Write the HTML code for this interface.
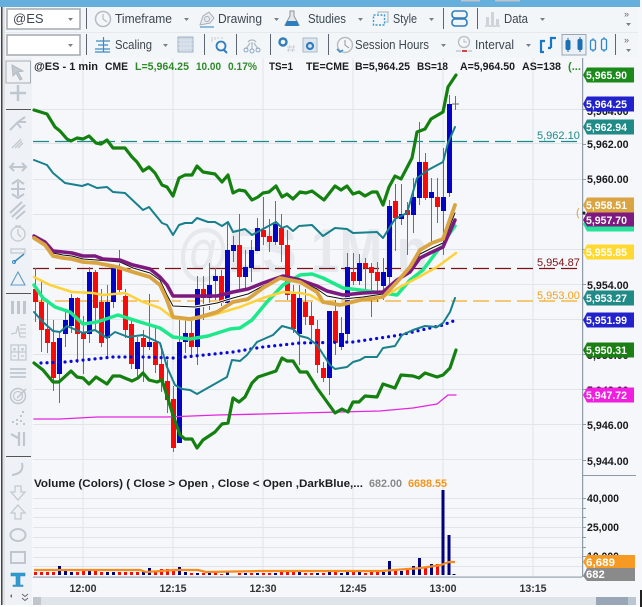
<!DOCTYPE html>
<html><head><meta charset="utf-8"><style>
html,body{margin:0;padding:0;background:#fff;width:642px;height:607px;overflow:hidden}
svg{display:block;font-family:"Liberation Sans",Arial,sans-serif}
.tb{font-size:13px;fill:#3c4650}
.lg{font-size:10.6px;font-weight:bold;fill:#1d1d1d}
.ax{font-size:10.7px;font-weight:bold;fill:#1a1a1a}
.tg{font-size:11.2px;font-weight:bold;fill:#fff}
.tm{font-size:10.6px;font-weight:bold;fill:#333;text-anchor:middle}
.car{fill:#77808a}
.i{fill:none;stroke:#c0c6ce;stroke-width:2}
.f{fill:#c0c6ce}
.b{fill:none;stroke:#3a8cc4;stroke-width:1.5}
.g{fill:none;stroke:#c3c9d0;stroke-width:1.3}
</style></head><body>
<svg width="642" height="607" viewBox="0 0 642 607" xmlns="http://www.w3.org/2000/svg">
<rect width="642" height="607" fill="#f5f7fa"/>
<!-- top -->
<rect x="0" y="0" width="640" height="7" fill="#66aedb"/>
<rect x="461" y="0" width="19" height="1.5" fill="#bcc4cc"/><rect x="495" y="0" width="25" height="1.5" fill="#bcc4cc"/>
<rect x="4" y="7" width="634" height="51" fill="#f3f6f9"/>
<rect x="4" y="32" width="634" height="1" fill="#e6eaef"/>
<rect x="1" y="7" width="1.5" height="600" fill="#444"/>
<rect x="2.5" y="7" width="2.5" height="600" fill="#dfe3e8"/>
<!-- row 1 -->
<rect x="7" y="9" width="73" height="20" fill="#fff" stroke="#a9adb2" stroke-width="1.6"/>
<text x="13" y="23" class="tb" fill="#333">@ES</text>
<path class="car" d="M68 18h5l-2.5 3z"/>
<rect x="86" y="8" width="1" height="21" fill="#5d6670"/>
<circle cx="103" cy="19" r="7.5" fill="#f4f6f8" stroke="#b5bcc4" stroke-width="1.5"/><path d="M103 14v5l4 3" fill="none" stroke="#b5bcc4" stroke-width="1.2"/>
<text x="115" y="23" class="tb" textLength="57" lengthAdjust="spacingAndGlyphs">Timeframe</text>
<path class="car" d="M184 18h5l-2.5 3z"/>
<path d="M200 25l3-9 6-4 5 6-4 5z" fill="#e8ecf0" stroke="#a9b0b9"/><circle cx="207" cy="19" r="2.5" fill="none" stroke="#a9b0b9"/><path d="M200 27h14" stroke="#6ea9d6" stroke-width="1.5"/>
<text x="218" y="23" class="tb" textLength="44" lengthAdjust="spacingAndGlyphs">Drawing</text>
<path class="car" d="M274 18h5l-2.5 3z"/>
<path d="M290 11h4v5l5 9h-14l5-9z" fill="#e4e8ec" stroke="#8d959e"/><path d="M287 21h10l2 5h-14z" fill="#2f7dbd"/>
<text x="308" y="23" class="tb" textLength="38" lengthAdjust="spacingAndGlyphs">Studies</text>
<path class="car" d="M358 18h5l-2.5 3z"/>
<rect x="373.500" y="15" width="11" height="10" fill="none" stroke="#3a9ad0" stroke-width="1.4" stroke-dasharray="2 1.5"/><path d="M378 15v-3h10v10h-3" fill="none" stroke="#b4bbc4" stroke-width="1.2"/>
<text x="393" y="23" class="tb" textLength="24" lengthAdjust="spacingAndGlyphs">Style</text>
<path class="car" d="M429 18h5l-2.500 3z"/>
<rect x="443" y="8" width="1" height="21" fill="#5d6670"/>
<rect x="452" y="11" width="15" height="7" rx="3" fill="none" stroke="#2f7dbd" stroke-width="1.6"/><rect x="452" y="19" width="15" height="7" rx="3" fill="none" stroke="#2f7dbd" stroke-width="1.6"/>
<rect x="477" y="8" width="1" height="21" fill="#5d6670"/>
<path d="M486 25V17h3v8zM491 25V12h3v13zM496 25v-6h3v6z" fill="#cfd4da"/><path d="M485 26h15" stroke="#b4bbc4"/>
<text x="504" y="23" class="tb" textLength="24" lengthAdjust="spacingAndGlyphs">Data</text>
<path class="car" d="M540 18h5l-2.500 3z"/>
<text x="624" y="17" font-size="9" fill="#666">»</text><path class="car" d="M626 23h5l-2.500 3z"/>
<!-- row 2 -->
<rect x="7" y="35" width="73" height="20" fill="#fff" stroke="#a9adb2" stroke-width="1.6"/>
<path class="car" d="M68 44h5l-2.500 3z"/>
<rect x="86" y="34" width="1" height="21" fill="#5d6670"/>
<path d="M103.500 37v15M96 41h14M98 45h10M95 49h15M95 52h15" fill="none" stroke="#3a8cc4" stroke-width="1.2"/>
<text x="115" y="49" class="tb" textLength="37" lengthAdjust="spacingAndGlyphs">Scaling</text>
<path class="car" d="M163 44h5l-2.500 3z"/>
<rect x="178" y="37" width="15" height="15" fill="#cbd7e3" stroke="#a2b2c2"/><path d="M178 40h15M181 40v12M184 40v12M187 40v12M190 40v12M178 44h15M178 48h15" stroke="#e4ebf2" stroke-width=".7"/>
<rect x="204" y="34" width="1" height="21" fill="#5d6670"/>
<circle cx="221" cy="46" r="4.500" fill="none" stroke="#2f7dbd" stroke-width="1.8"/><path d="M224 50l3 3" stroke="#2f7dbd" stroke-width="2"/><path d="M212 42v-5M215 40v-3M218 39v-2M222 39v-2" stroke="#c3c9d0"/>
<rect x="236" y="34" width="1" height="21" fill="#5d6670"/>
<path d="M248 42a5 5 0 0 1 8 0M246 49l4-6M258 49l-4-6M252 42v7" fill="none" stroke="#aeb8c2" stroke-width="1.2"/><circle cx="246" cy="50" r="2" fill="none" stroke="#8aa8c2"/><circle cx="252" cy="51" r="2" fill="none" stroke="#8aa8c2"/><circle cx="258" cy="50" r="2" fill="none" stroke="#8aa8c2"/>
<rect x="270" y="34" width="1" height="21" fill="#5d6670"/>
<circle cx="283" cy="42" r="3.500" fill="none" stroke="#2f7dbd" stroke-width="2.400"/><path d="M288 52l2-7M292 52l2-7M287 47h8M287 50h8" stroke="#c3c9d0" stroke-width=".8"/>
<rect x="303" y="38" width="14" height="14" fill="#dde6ee" stroke="#a8bacb"/><circle cx="310" cy="46" r="3" fill="none" stroke="#2f7dbd" stroke-width="2.200"/>
<rect x="328" y="34" width="1" height="21" fill="#5d6670"/>
<circle cx="345" cy="45" r="7.500" fill="#f4f6f8" stroke="#b5bcc4" stroke-width="1.400"/><path d="M345 40v5l4 3" fill="none" stroke="#8d959e"/><path d="M337 49l3 3 3-2" fill="none" stroke="#3a8cc4" stroke-width="1.500"/>
<text x="355" y="49" class="tb" textLength="74" lengthAdjust="spacingAndGlyphs">Session Hours</text>
<path class="car" d="M441 44h5l-2.500 3z"/>
<circle cx="464" cy="42" r="5.500" fill="#f4f6f8" stroke="#b5bcc4" stroke-width="1.300"/><path d="M464 39v3h3" fill="none" stroke="#b5bcc4"/><path d="M456 51h5" stroke="#c3c9d0" stroke-width="1.500"/><path d="M462 51h5" stroke="#d04545" stroke-width="2"/><path d="M468 51h4" stroke="#c3c9d0" stroke-width="1.500"/>
<text x="475" y="49" class="tb" textLength="39" lengthAdjust="spacingAndGlyphs">Interval</text>
<path class="car" d="M526 44h5l-2.500 3z"/>
<path d="M541 52v-11h4M544 52h-4M551 48V38h5M548 48h3" fill="none" stroke="#1778c4" stroke-width="2.200"/>
<rect x="562" y="34.500" width="24" height="20.500" fill="#eaf0f5" stroke="#9aa6b2"/>
<path d="M568 38v14M580 37v15" stroke="#1c5f98"/><rect x="565.500" y="40" width="5" height="10" rx="1.500" fill="#1c6fb4"/><rect x="577.500" y="39" width="5" height="11" rx="1.500" fill="#1c6fb4"/>
<path d="M593 38v14M604 37v15" stroke="#2f86c8"/><rect x="590.500" y="40" width="5" height="10" rx="1.500" fill="#f3f6f9" stroke="#2f86c8" stroke-width="1.300"/><rect x="601.500" y="39" width="5" height="11" rx="1.500" fill="#f3f6f9" stroke="#2f86c8" stroke-width="1.300"/>
<rect x="615" y="34" width="1" height="21" fill="#5d6670"/>
<text x="624" y="43" font-size="9" fill="#666">»</text><path class="car" d="M626 49h5l-2.500 3z"/>

<!-- grid -->
<g stroke="#e0e5eb" stroke-width="1">
<path d="M83 58V577M173 58V577M263 58V577M353 58V577M443 58V577M533 58V577"/>
<path d="M33 109.500H582M33 143.500H582M33 179.500H582M33 214.500H582M33 249.500H582M33 284.500H582M33 319.500H582M33 354.500H582M33 389.500H582M33 424.500H582M33 459.500H582"/>
<path d="M33 498.500H582M33 508.500H582M33 517.500H582M33 527.500H582M33 537.500H582M33 547.500H582M33 557.500H582M33 566.500H582"/>
</g>
<text x="178" y="272" font-size="62" font-weight="bold" fill="#e5e8ec" textLength="250" lengthAdjust="spacingAndGlyphs">@ES 1Min</text>

<!-- dashed levels -->
<path d="M33 141.500H580" stroke="#1d8a8a" stroke-width="1.200" stroke-dasharray="16 6"/>
<path d="M33 268.500H580" stroke="#7a1218" stroke-width="1.200" stroke-dasharray="16 6"/>
<path d="M33 301H580" stroke="#f3ab2c" stroke-width="1.200" stroke-dasharray="16 6"/>
<text x="537" y="139" font-size="11" fill="#1d8a8a">5,962.10</text>
<text x="537" y="266" font-size="11" fill="#7a1218">5,954.87</text>
<text x="537" y="299" font-size="11" fill="#f3a21c">5,953.00</text>

<!-- wicks -->
<path stroke="#6e6e6e" stroke-width="1" fill="none" d="M35.500 268V322M41.500 282V352M47.500 302V353M53.500 320V391M59.500 333V403M65.500 310V347M71.500 294V333M77.500 297V363M83.500 316V374M89.500 267V343M95.500 270V330M101.500 289V347M107.500 285V357M113.500 266V308M119.500 250V292M125.500 289V338M131.500 320V369M137.500 337V377M143.500 330V382M149.500 294V350M155.500 328V373M161.500 345V392M167.500 360V413M173.500 386V452M179.500 320V443M185.500 320V353M191.500 320V358M197.500 276V365M203.500 276V320M209.500 263V310M215.500 268V300M221.500 270V306M227.500 223V306M233.500 236V262M239.500 214V290M245.500 250V290M251.500 240V282M257.500 218V251M263.500 197V245M269.500 219V252M275.500 201V245M281.500 214V262M287.500 230V300M293.500 285V333M299.500 285V365M305.500 289V325M311.500 302V340M317.500 320V373M323.500 362V382M329.500 311V395M335.500 300V355M341.500 317V350M347.500 253V343M353.500 253V285M359.500 254V285M365.500 258V290M371.500 263V317M377.500 262V302M383.500 258V300M389.500 200V285M395.500 184V251M401.500 184V225M407.500 202V255M413.500 178V233M419.500 122V205M425.500 153V200M431.500 178V243M437.500 178V223M443.500 148V255M449.500 95V197M455.500 96V110M452 104H459"/>
<!-- red bodies -->
<path fill="#f60a0a" d="M33 289h5v13h-5zM39 302h5v28h-5zM45 329h5v14h-5zM51 342h5v36h-5zM75 298h5v36h-5zM81 333h5v6h-5zM93 272h5v36h-5zM99 302h5v41h-5zM117 268h5v22h-5zM123 296h5v34h-5zM129 324h5v40h-5zM141 338h5v9h-5zM153 342h5v23h-5zM159 364h5v17h-5zM165 381h5v19h-5zM171 399h5v49h-5zM189 333h5v14h-5zM201 289h5v9h-5zM219 276h5v27h-5zM237 245h5v32h-5zM261 230h5v7h-5zM267 236h5v6h-5zM279 228h5v17h-5zM285 245h5v50h-5zM291 294h5v35h-5zM303 302h5v15h-5zM309 316h5v9h-5zM315 329h5v36h-5zM321 368h5v10h-5zM333 311h5v32h-5zM351 272h5v9h-5zM363 263h5v5h-5zM369 267h5v6h-5zM375 272h5v9h-5zM393 201h5v17h-5zM405 210h5v5h-5zM423 162h5v36h-5zM435 197h5v10h-5z"/>
<!-- blue bodies -->
<path fill="#0404c4" d="M57 338h5v36h-5zM63 320h5v14h-5zM69 298h5v28h-5zM87 272h5v62h-5zM105 302h5v36h-5zM111 268h5v34h-5zM135 342h5v27h-5zM147 342h5v5h-5zM177 342h5v101h-5zM183 333h5v9h-5zM195 289h5v58h-5zM207 285h5v13h-5zM213 276h5v5h-5zM225 250h5v53h-5zM231 245h5v6h-5zM243 267h5v10h-5zM249 250h5v18h-5zM255 228h5v23h-5zM273 224h5v18h-5zM297 298h5v36h-5zM327 311h5v67h-5zM339 333h5v14h-5zM345 267h5v67h-5zM357 263h5v18h-5zM381 272h5v14h-5zM387 206h5v71h-5zM399 214h5v5h-5zM411 197h5v18h-5zM417 162h5v36h-5zM429 192h5v6h-5zM441 197h5v14h-5zM447 104h5v89h-5z"/>

<!-- indicators -->
<g fill="none" stroke-linejoin="round" stroke-linecap="round">
<polyline stroke="#e326df" stroke-width="1.300" points="34,419 60,419 97,417 167,417 217,415 263,414 300,413 380,411 413,408 437,404 448,395 456,395"/>
<polyline stroke="#0a0ad8" stroke-width="3.200" stroke-dasharray="0 6.020" points="41,363 65,362 113,357 143,357 173,358 185,357 233,352 263,347 300,343 353,342 400,335 443,325 456,320"/>
<polyline stroke="#17808c" stroke-width="2" points="34,312 43,322 53,331 60,332 67,326 83,333 95,330 107,338 115,332 128,337 143,335 160,343 167,367 175,385 182,389 190,390 197,394 227,377 232,360 240,361 247,355 257,342 273,335 282,326 293,329 300,336 308,338 317,345 330,365 335,369 347,367 353,362 360,360 365,357 377,357 383,348 395,346 402,335 413,330 425,326 437,327 443,323 450,312 455,298"/>
<polyline stroke="#17808c" stroke-width="2" points="34,160 47,165 53,173 65,183 82,186 88,184 97,188 107,187 113,192 125,193 143,210 149,207 162,223 167,225 173,235 179,225 185,223 192,223 197,218 208,222 215,222 222,226 228,222 233,232 245,229 252,235 263,229 276,222 282,228 287,226 293,231 299,226 312,225 323,236 335,228 347,229 353,233 377,232 383,238 395,219 407,213 417,178 428,170 443,162 448,143 455,127"/>
<polyline stroke="#1de98b" stroke-width="3.500" points="34,285 43,298 55,307 70,312 83,324 97,322 118,315 140,322 160,328 173,337 190,339 208,336 230,329 240,328 252,320 267,302 283,285 300,275 312,274 323,278 343,288 360,290 383,293 397,295 410,280 423,270 438,250 445,240 455,226"/>
<polyline stroke="#fdd23a" stroke-width="2.500" points="34,277 50,285 72,292 93,293 103,295 125,293 143,302 160,308 173,318 190,320 213,315 240,307 263,298 283,292 300,293 310,295 322,302 343,305 363,300 383,297 400,287 417,278 437,267 456,253"/>
<polyline stroke="#fff" stroke-width="3" points="34,237 45,243 53,253 63,255 72,256 83,259 97,260 120,262 133,268 150,273 160,280 167,295 173,306 195,307 217,303 233,298 248,294 263,286 283,277 300,281 317,289 327,296 343,299 363,297 383,294 397,281 410,269 420,254 432,248 443,243 455,213"/>
<polyline stroke="#111" stroke-width="1" points="34,237 45,243 53,253 63,255 72,256 83,259 97,260 120,262 133,268 150,273 160,280 167,295 173,306 195,307 217,303 233,298 248,294 263,286 283,277 300,281 317,289 327,296 343,299 363,297 383,294 397,281 410,269 420,254 432,248 443,243 455,213"/>
<polyline stroke="#7d1a80" stroke-width="3.500" points="34,236 45,242 53,251 63,252 72,253 83,256 95,256 103,259 120,260 133,265 150,269 160,277 167,285 173,296 197,296 217,296 233,292 248,289 263,283 283,276 300,280 317,286 327,291 343,295 363,293 383,292 397,280 410,272 420,258 430,253 443,247 455,220"/>
<polyline stroke="#d9a441" stroke-width="3.800" points="34,238 45,245 53,256 63,258 72,259 83,262 97,263 117,267 133,272 150,277 160,285 167,300 173,317 190,319 200,317 217,312 233,302 248,299 263,288 280,278 300,282 317,292 323,302 340,305 360,300 383,297 397,282 410,267 420,250 432,243 443,239 455,205"/>
<polyline stroke="#13800f" stroke-width="3.200" points="34,363 43,370 53,382 59,382 71,371 77,377 83,378 89,384 96,377 107,384 113,376 120,376 132,381 138,378 143,373 149,380 157,382 162,380 173,415 180,435 185,439 192,439 197,448 203,440 215,432 222,424 228,423 233,398 239,402 245,397 252,383 258,377 276,371 282,358 287,361 293,361 300,372 307,372 317,388 335,413 342,409 348,412 353,402 359,402 365,396 377,397 383,384 395,388 401,375 413,376 419,378 425,373 437,377 443,375 450,368 456,350"/>
<polyline stroke="#13800f" stroke-width="3.200" points="34,110 47,114 55,127 60,131 67,139 71,141 77,138 83,139 89,136 96,143 101,144 107,140 113,148 125,148 132,157 137,162 143,171 149,167 155,173 162,185 167,187 173,196 179,178 185,175 192,175 197,166 203,172 215,174 222,182 228,175 233,193 239,190 245,191 252,200 258,197 263,193 269,192 276,186 282,197 287,194 293,199 300,192 306,193 312,191 324,200 335,186 341,190 347,186 353,194 359,192 365,196 372,192 377,192 383,205 389,187 395,176 401,179 412,158 417,132 425,129 431,119 443,112 448,87 456,75"/>
</g>

<!-- volume -->
<path stroke="#f60a0a" stroke-width="3" fill="none" d="M35.500 575v-3M41.500 575v-3M47.500 575v-3M53.500 575v-3M77.500 575v-3M83.500 575v-6M95.500 575v-4M101.500 575v-3M119.500 575v-3M125.500 575v-3M131.500 575v-3M137.500 575v-3M155.500 575v-3M161.500 575v-6M167.500 575v-6M173.500 575v-6M191.500 575v-2M203.500 575v-2M215.500 575v-3M221.500 575v-1M239.500 575v-2M251.500 575v-2M263.500 575v-2M269.500 575v-2M281.500 575v-3M287.500 575v-4M293.500 575v-4M305.500 575v-2M311.500 575v-2M323.500 575v-2M335.500 575v-3M353.500 575v-4M365.500 575v-2M371.500 575v-3M377.500 575v-3M395.500 575v-6M407.500 575v-5M425.500 575v-8M437.500 575v-11"/>
<path stroke="#00007f" stroke-width="3" fill="none" d="M59.500 575v-9M65.500 575v-4M71.500 575v-3M89.500 575v-6M107.500 575v-3M113.500 575v-3M143.500 575v-3M149.500 575v-7M179.500 575v-8M185.500 575v-3M197.500 575v-2M209.500 575v-4M227.500 575v-3M245.500 575v-2M257.500 575v-2M275.500 575v-2M299.500 575v-4M317.500 575v-2M329.500 575v-3M341.500 575v-2M347.500 575v-3M359.500 575v-5M383.500 575v-3M389.500 575v-14M401.500 575v-4M413.500 575v-9M419.500 575v-17M431.500 575v-11M443 575v-85M449 575v-40M454 575v-1"/>
<polyline fill="none" stroke="#f58d1e" stroke-width="2.200" points="34,570 140,570 146,572 175,570 198,570 206,572 260,571 381,571 421,568 441,565 449,562 455,562"/>
<rect x="33" y="576.500" width="549" height="1.200" fill="#97a3ae"/>

<!-- legends -->
<text x="34" y="70" class="lg" textLength="64" lengthAdjust="spacingAndGlyphs">@ES - 1 min</text>
<text x="105" y="70" class="lg" textLength="23" lengthAdjust="spacingAndGlyphs">CME</text>
<g font-size="10.600" font-weight="bold" fill="#2f8a2a">
<text x="135" y="70" textLength="54" lengthAdjust="spacingAndGlyphs">L=5,964.25</text>
<text x="196" y="70" textLength="25" lengthAdjust="spacingAndGlyphs">10.00</text>
<text x="228" y="70" textLength="29" lengthAdjust="spacingAndGlyphs">0.17%</text>
<text x="568" y="70" textLength="13" lengthAdjust="spacingAndGlyphs">(...</text>
</g>
<text x="269" y="70" class="lg" textLength="24" lengthAdjust="spacingAndGlyphs">TS=1</text>
<text x="306" y="70" class="lg" textLength="43" lengthAdjust="spacingAndGlyphs">TE=CME</text>
<text x="355" y="70" class="lg" textLength="55" lengthAdjust="spacingAndGlyphs">B=5,964.25</text>
<text x="417" y="70" class="lg" textLength="31" lengthAdjust="spacingAndGlyphs">BS=18</text>
<text x="460" y="70" class="lg" textLength="55" lengthAdjust="spacingAndGlyphs">A=5,964.50</text>
<text x="522" y="70" class="lg" textLength="39" lengthAdjust="spacingAndGlyphs">AS=138</text>
<text x="34" y="487" class="lg" textLength="329" lengthAdjust="spacingAndGlyphs">Volume (Colors) (  Close &gt; Open ,  Close &lt; Open ,DarkBlue,...</text>
<text x="369" y="487" font-size="11" font-weight="bold" fill="#8a8a8a" textLength="33" lengthAdjust="spacingAndGlyphs">682.00</text>
<text x="408" y="487" font-size="11" font-weight="bold" fill="#f5951d" textLength="39" lengthAdjust="spacingAndGlyphs">6688.55</text>

<!-- axis -->
<rect x="582" y="58" width="1.200" height="519" fill="#8e9aa6"/>
<rect x="582" y="475" width="54" height="1" fill="#8e9aa6"/>
<path stroke="#8e9aa6" d="M583 109.500h3M583 144.500h3M583 179.500h3M583 214.500h3M583 249.500h3M583 284.500h3M583 319.500h3M583 354.500h3M583 389.500h3M583 424.500h3M583 460.500h3M583 498.500h3M583 508.500h3M583 517.500h3M583 527.500h3M583 537.500h3M583 547.500h3M583 556.500h3"/>
<text x="587" y="115" class="ax">5,964.00</text>
<text x="587" y="148" class="ax">5,962.00</text>
<text x="587" y="183" class="ax">5,960.00</text>
<text x="587" y="218" class="ax">5,958.00</text>
<text x="587" y="254" class="ax">5,956.00</text>
<text x="587" y="289" class="ax">5,954.00</text>
<text x="587" y="324" class="ax">5,952.00</text>
<text x="587" y="359" class="ax">5,950.00</text>
<text x="587" y="394" class="ax">5,948.00</text>
<text x="587" y="429" class="ax">5,946.00</text>
<text x="587" y="465" class="ax">5,944.00</text>
<text x="587" y="502" class="ax" textLength="32" lengthAdjust="spacingAndGlyphs">40,000</text>
<text x="587" y="531" class="ax" textLength="32" lengthAdjust="spacingAndGlyphs">25,000</text>
<text x="587" y="560" class="ax" textLength="32" lengthAdjust="spacingAndGlyphs">10,000</text>
<text x="576" y="216" font-size="11" fill="#d9a441">(</text>
<circle cx="584" cy="213" r="1.500" fill="#222"/>

<!-- tags -->
<g>
<path fill="#1b8a1b" d="M583 75l4-7.500h47v15h-47z"/><text x="586" y="79" class="tg" textLength="41" lengthAdjust="spacingAndGlyphs">5,965.90</text>
<path fill="#2222cc" d="M583 104l4-7.500h47v15h-47z"/><text x="586" y="108" class="tg" textLength="41" lengthAdjust="spacingAndGlyphs">5,964.25</text>
<path fill="#1f8a86" d="M583 127l4-7.500h47v15h-47z"/><text x="586" y="131" class="tg" textLength="41" lengthAdjust="spacingAndGlyphs">5,962.94</text>
<path fill="#25e39a" d="M583 224l4-7.500h47v15h-47z"/>
<path fill="#d9a441" d="M583 205l4-7.500h47v15h-47z"/><text x="586" y="209" class="tg" textLength="41" lengthAdjust="spacingAndGlyphs">5,958.51</text>
<path fill="#7d1a80" d="M583 220l4-7.500h47v14h-47z"/><text x="586" y="224" class="tg" textLength="41" lengthAdjust="spacingAndGlyphs">5,957.70</text>
<path fill="#ffd92f" d="M583 252l4-7.500h47v15h-47z"/><text x="586" y="256" class="tg" textLength="41" lengthAdjust="spacingAndGlyphs">5,955.85</text>
<path fill="#1f8a86" d="M583 298l4-7.500h47v15h-47z"/><text x="586" y="302" class="tg" textLength="41" lengthAdjust="spacingAndGlyphs">5,953.27</text>
<path fill="#2222cc" d="M583 320l4-7.500h47v15h-47z"/><text x="586" y="324" class="tg" textLength="41" lengthAdjust="spacingAndGlyphs">5,951.99</text>
<path fill="#1b7f14" d="M583 350l4-7.500h47v15h-47z"/><text x="586" y="354" class="tg" textLength="41" lengthAdjust="spacingAndGlyphs">5,950.31</text>
<path fill="#f01fe0" d="M583 395l4-7.500h47v15h-47z"/><text x="586" y="399" class="tg" textLength="41" lengthAdjust="spacingAndGlyphs">5,947.72</text>
<path fill="#f79a23" d="M583 562l4-7h48v13h-48z"/><text x="586" y="566" class="tg" textLength="29" lengthAdjust="spacingAndGlyphs">6,689</text>
<path fill="#8a8a8a" d="M587 568h48v13h-48l-4-5z"/><text x="586" y="578" class="tg">682</text>
</g>

<!-- time axis -->
<text x="83" y="592" class="tm">12:00</text>
<text x="173" y="592" class="tm">12:15</text>
<text x="263" y="592" class="tm">12:30</text>
<text x="353" y="592" class="tm">12:45</text>
<text x="443" y="592" class="tm">13:00</text>
<text x="533" y="592" class="tm">13:15</text>
<rect x="33" y="597" width="603" height="8" fill="#dfe4ea"/>
<rect x="33" y="597" width="8" height="8" fill="#c0c5cb"/>
<rect x="596" y="597" width="32" height="8" fill="#98a6b6"/>
<rect x="628" y="597" width="8" height="8" fill="#bac6d2"/>
<rect x="0" y="605" width="642" height="2" fill="#fff"/>
<rect x="640" y="590" width="2" height="17" fill="#222"/>

<!-- left toolbar -->
<rect x="5" y="58" width="27" height="547" fill="#eef2f6"/>
<rect x="6" y="61" width="24.500" height="22" fill="#f0f2f5" stroke="#a7adb4"/>
<path d="M12 65l11 6-5 1 4 7-2 1-4-7-3 3z" fill="#c3c9d0" stroke="#b4bac2"/>
<path class="i" d="M18 85v16M10 93h16" style="stroke-width:2.500"/>
<rect x="6" y="109" width="25" height="1" fill="#555"/>
<path class="i" d="M10 130l8-8 7-5M18 122l8 0M17 123l4 5"/>
<path class="g" d="M12 148l9-9M15 148l7-7M18 148l5-5"/>
<path class="i" d="M11 167h14M14 163l-4 4 4 4M22 163l4 4-4 4"/>
<path class="i" d="M18 182v14M12 184l6-4 6 4M12 194l6 4 6-4M11 189h14"/>
<path class="i" d="M10 213l12-11M12 217l13-12M16 219l9-8"/>
<circle cx="18" cy="234" r="7" class="g"/><path class="g" d="M18 229v5l3 3M15 226h6"/>
<path class="g" d="M11 249h14v4h-14z"/><path d="M14 262l10-8" stroke="#3a8cc4" stroke-width="1.500"/><circle cx="14" cy="262" r="1.500" fill="none" stroke="#3a8cc4"/>
<path class="b" d="M18 272l7 13h-14z" style="stroke:#5e9cc6;stroke-width:1.100"/>
<rect x="6" y="293" width="25" height="1" fill="#555"/>
<path class="f" d="M11 301h3v13h-3zM17 301h3v13h-3zM23 301h3v13h-3z"/>
<path class="g" d="M11 334l5-1 2-7 2 11M20 325h6M20 329h6M20 333h6M20 337h6"/>
<path class="g" d="M11 345h15v15h-15zM11 352h15M18.500 345v15M13 349h3M21 349h3M14.500 348v3M22.500 348v3M13 356h3M21 356h3"/>
<path class="i" style="stroke-width:1.800" d="M10 369h16M10 373h16M10 377h16"/>
<circle cx="18" cy="396" r="7.500" class="i" style="stroke-width:1.500"/><circle cx="18" cy="396" r="4.500" class="g"/><path class="i" style="stroke-width:1.500" d="M17 398l9-9"/>
<path class="f" d="M12 421h2v2h-2zM16 419h2v2h-2zM20 420h2v2h-2zM23 423h2v2h-2zM16 423h2v2h-2zM20 415h2v2h-2zM22 411h2v2h-2z"/>
<path class="i" d="M11 434l7 4M19 432v14M24 432v14" style="stroke-width:2.200"/>
<rect x="6" y="456" width="25" height="1" fill="#555"/>
<path class="i" d="M22 463c2 8-3 11-10 12"/>
<path class="g" d="M15 486h6v6h4l-7 8-7-8h4z"/>
<path class="g" d="M18 505l7 8h-4v6h-6v-6h-4z"/>
<ellipse cx="18" cy="535" rx="7.500" ry="6" class="i"/>
<rect x="11" y="552" width="14" height="11" class="i"/>
<path d="M11 573h14v3h-5v9h3v1.500h-10v-1.500h3v-9h-5z" fill="#2f9bd0" stroke="#2f88bd" stroke-width=".6"/>
<path d="M12 594v4l-2-2z" fill="#666"/>
<path d="M22 594l3 2.500 3-2.500M22 598l3 2.500 3-2.500" fill="none" stroke="#666"/>
</svg>
</body></html>
